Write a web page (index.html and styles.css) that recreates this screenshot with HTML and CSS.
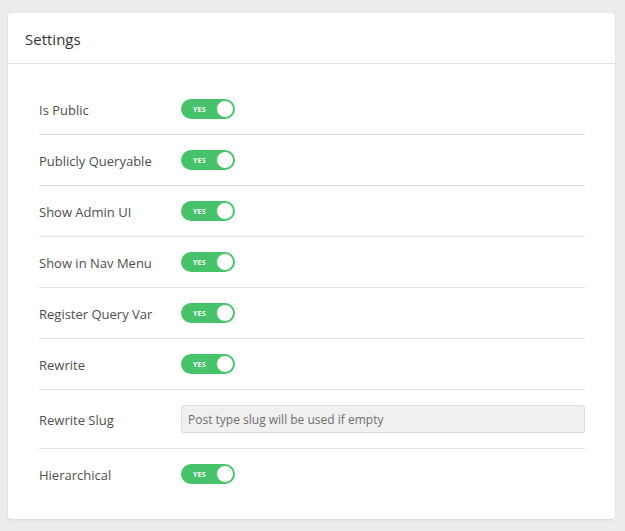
FILE: index.html
```html
<!DOCTYPE html>
<html>
<head>
<meta charset="utf-8">
<link rel="stylesheet" href="styles.css">
</head>
<body>
<div class="card">
  <div class="card-header">Settings</div>
  <div class="card-body">
    <div class="row"><div class="label">Is Public</div><div class="switch"><span class="yes">YES</span><span class="knob"></span></div></div>
    <div class="row"><div class="label">Publicly Queryable</div><div class="switch"><span class="yes">YES</span><span class="knob"></span></div></div>
    <div class="row"><div class="label">Show Admin UI</div><div class="switch"><span class="yes">YES</span><span class="knob"></span></div></div>
    <div class="row"><div class="label">Show in Nav Menu</div><div class="switch"><span class="yes">YES</span><span class="knob"></span></div></div>
    <div class="row"><div class="label">Register Query Var</div><div class="switch"><span class="yes">YES</span><span class="knob"></span></div></div>
    <div class="row"><div class="label">Rewrite</div><div class="switch"><span class="yes">YES</span><span class="knob"></span></div></div>
    <div class="row"><div class="label">Rewrite Slug</div><input class="text-input" type="text" placeholder="Post type slug will be used if empty"></div>
    <div class="row last"><div class="label">Hierarchical</div><div class="switch"><span class="yes">YES</span><span class="knob"></span></div></div>
  </div>
</div>
</body>
</html>
```
FILE: styles.css
```css
html, body {
  margin: 0;
  padding: 0;
}
body {
  background: #ececec;
  font-family: "Open Sans", "Noto Sans", sans-serif;
  color: #444;
  padding: 13px 10px 12px 8px;
}
.card {
  background: #fff;
  border-radius: 4px;
  box-shadow: 0 1px 3px rgba(0,0,0,0.08);
  width: 607px;
}
.card-header {
  height: 50px;
  line-height: 53px;
  padding-left: 17px;
  font-size: 15px;
  color: #333;
  border-bottom: 1px solid #e2e2e2;
}
.card-body {
  padding: 20px 30px 20px 31px;
}
.row {
  display: flex;
  align-items: center;
  padding: 15px 0;
  border-bottom: 1px solid #e2e2e2;
}
.row.last {
  border-bottom: none;
}
.label {
  width: 142px;
  font-size: 13px;
  color: #4f4f4f;
  flex-shrink: 0;
  padding-top: 2px;
}
.switch {
  width: 54px;
  height: 20px;
  border-radius: 10px;
  background: #46c36a;
  display: flex;
  align-items: center;
  justify-content: space-between;
  padding: 0 1px 0 0;
  box-sizing: border-box;
}
.yes {
  font-size: 7px;
  font-weight: 700;
  color: #fff;
  padding-left: 12px;
  letter-spacing: 0.2px;
}
.knob {
  width: 16px;
  height: 16px;
  border-radius: 50%;
  background: #fff;
  border: 1px solid #46c36a;
}
.text-input {
  flex: 1;
  height: 28px;
  box-sizing: border-box;
  background: #f0f0f0;
  border: 1px solid #dcdcdc;
  border-radius: 2px;
  padding: 1px 6px 0;
  font-family: "Open Sans", "Noto Sans", sans-serif;
  font-size: 12px;
  color: #555;
  margin: 0;
}
.text-input::placeholder {
  color: #6f6f6f;
}
```
